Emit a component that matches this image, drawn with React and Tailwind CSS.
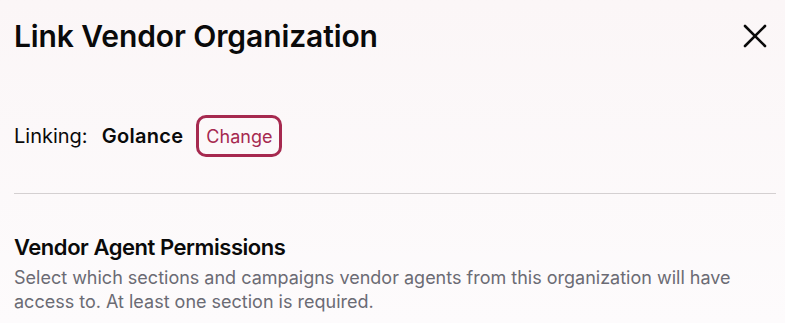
import React from 'react'

const App = () =>
{
    return (
        <div className="min-h-[323px] w-[785px] bg-gradient-to-b from-[#fbf6f7] to-[#fdfbfc] font-['Inter',sans-serif] text-[#0a0a0a]">
            {/* Header */}
            <div className="flex items-center justify-between pl-[14px] pr-[18px] pt-[18px]">
                <h1 className="text-[30px] font-semibold leading-[36px] tracking-[-0.1px]">Link Vendor Organization</h1>
                <button className="p-0 text-[#0a0a0a]">
                    <svg width="24" height="24" viewBox="0 0 24 24" fill="none" stroke="currentColor" strokeWidth="2.6" strokeLinecap="round">
                        <path d="M2 2 22 22" />
                        <path d="M22 2 2 22" />
                    </svg>
                </button>
            </div>

            {/* Linking row */}
            <div className="mt-[61px] flex items-center px-[14px]">
                <span className="text-[20px]">Linking:</span>
                <span className="ml-[14px] text-[20px] font-semibold tracking-[0.3px]">Golance</span>
                <button className="ml-[13px] h-[42px] rounded-[10px] border-[3px] border-[#a6294f] px-[7px] text-[18px] text-[#a6294f]">
                    Change
                </button>
            </div>

            <div className="ml-[14px] mr-[9px] mt-[36px] h-px bg-[#d4d0d1]" />

            {/* Permissions */}
            <div className="px-[14px] pt-[40px]">
                <h2 className="text-[22px] font-semibold leading-[26px] tracking-[-0.45px]">Vendor Agent Permissions</h2>
                <p className="mt-[6px] pr-[40px] text-[18px] leading-[24px] text-[#6b6b74]">
                    Select which sections and campaigns vendor agents from this organization will have access to. At least one section is required.
                </p>
            </div>
        </div>
    )
}

export default App
